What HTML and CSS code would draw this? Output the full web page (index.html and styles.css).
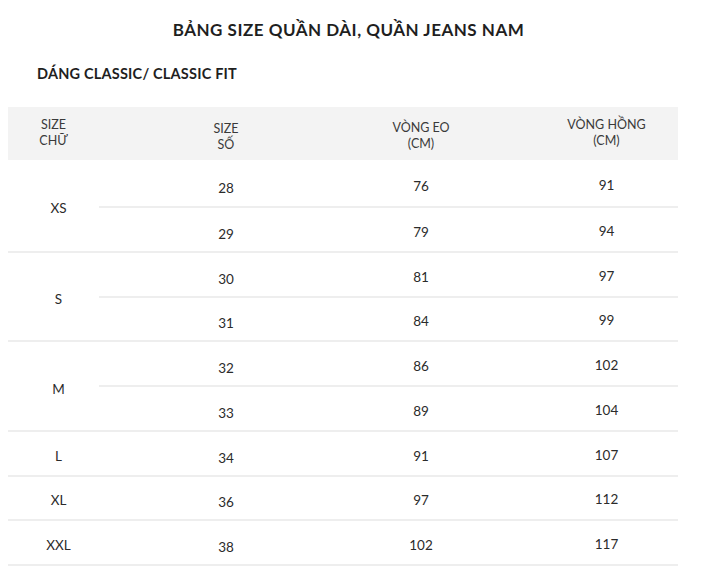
FILE: index.html
```html
<!DOCTYPE html>
<html lang="vi">
<head>
<meta charset="utf-8">
<title>Bảng size quần dài, quần jeans nam</title>
<link rel="stylesheet" href="styles.css">
</head>
<body>
<div class="page">
  <h1 class="title">BẢNG SIZE QUẦN DÀI, QUẦN JEANS NAM</h1>
  <h2 class="subtitle">DÁNG CLASSIC/ CLASSIC FIT</h2>
  <table class="sizes">
    <colgroup>
      <col class="c1"><col class="c2"><col class="c3"><col class="c4">
    </colgroup>
    <thead>
      <tr>
        <th class="h1"><span>SIZE<br>CHỮ</span></th>
        <th class="h2"><span>SIZE<br>SỐ</span></th>
        <th class="h3"><span>VÒNG EO<br>(CM)</span></th>
        <th class="h4"><span>VÒNG HỒNG<br>(CM)</span></th>
      </tr>
    </thead>
    <tbody>
      <tr><td class="letter" rowspan="2">XS</td><td class="n2">28</td><td class="n3">76</td><td class="n4">91</td></tr>
      <tr><td class="n2">29</td><td class="n3">79</td><td class="n4">94</td></tr>
      <tr><td class="letter" rowspan="2">S</td><td class="n2">30</td><td class="n3">81</td><td class="n4">97</td></tr>
      <tr><td class="n2">31</td><td class="n3">84</td><td class="n4">99</td></tr>
      <tr><td class="letter" rowspan="2">M</td><td class="n2">32</td><td class="n3">86</td><td class="n4">102</td></tr>
      <tr><td class="n2">33</td><td class="n3">89</td><td class="n4">104</td></tr>
      <tr><td class="letter">L</td><td class="n2">34</td><td class="n3">91</td><td class="n4">107</td></tr>
      <tr><td class="letter">XL</td><td class="n2">36</td><td class="n3">97</td><td class="n4">112</td></tr>
      <tr><td class="letter">XXL</td><td class="n2">38</td><td class="n3">102</td><td class="n4">117</td></tr>
    </tbody>
  </table>
</div>
</body>
</html>
```
FILE: styles.css
```css
* { box-sizing: border-box; }
html, body { margin: 0; padding: 0; background: #ffffff; }
body {
  font-family: "Lato", "Open Sans", "Liberation Sans", sans-serif;
  color: #222222;
}
.page {
  width: 727px;
  padding: 19px 8px 0 8px;
}
.title {
  margin: 0;
  text-align: center;
  font-size: 17px;
  font-weight: 700;
  letter-spacing: 0.5px;
  line-height: 22px;
  color: #1f1f1f;
  padding-right: 30px;
}
.subtitle {
  margin: 23px 0 0 29px;
  font-size: 14.5px;
  font-weight: 700;
  letter-spacing: 0.2px;
  line-height: 20px;
  color: #1f1f1f;
}
.sizes {
  margin-top: 23px;
  width: 670px;
  border-collapse: collapse;
  table-layout: fixed;
  font-size: 13.5px;
  color: #2b2b2b;
}
.c1 { width: 91px; }
.c2 { width: 254px; }
.c3 { width: 136px; }
.c4 { width: 189px; }
.sizes thead th {
  background: #f3f3f3;
  height: 53px;
  padding: 0;
  font-weight: 400;
  line-height: 16px;
  text-align: center;
  color: #3a3a3a;
  font-size: 12.5px;
}
.sizes th span { display: inline-block; }
.h1 span { position: relative; top: -1px; }
.h2 span { position: relative; top: 3px; }
.h3 span { position: relative; top: 2px; }
.h4 span { position: relative; top: -1px; padding-left: 46px; }
.sizes td {
  height: 44.75px;
  padding: 0;
  text-align: center;
  vertical-align: middle;
  border-bottom: 2px solid #eeeeee;
}
.sizes tbody tr:first-child td { height: 47px; }
.sizes td.letter { padding: 5px 0 0 10px; }
.sizes td.n2 { padding-top: 9px; }
.sizes td.n3 { padding-top: 5px; }
.sizes td.n4 { padding: 3px 0 0 46px; }
```
